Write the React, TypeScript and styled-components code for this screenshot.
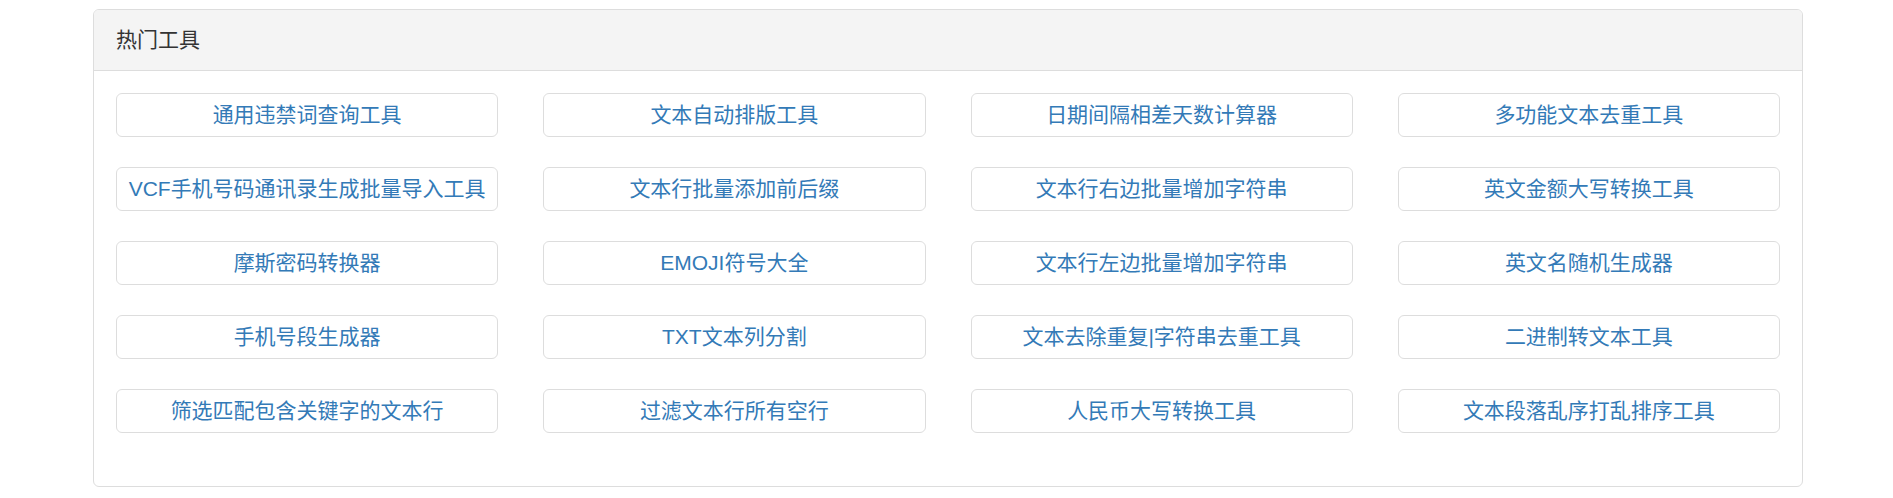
import styled, { createGlobalStyle } from "styled-components";

const GlobalStyle = createGlobalStyle`
  body {
    margin: 0;
    background-color: #ffffff;
    font-family: "Liberation Sans", "Noto Sans CJK SC", sans-serif;
  }
`;

const Page = styled.div`
  padding: 9px 0 0 93px;
`;

const Panel = styled.div`
  width: 1710px;
  box-sizing: border-box;
  border: 1px solid #dddddd;
  border-radius: 6px;
  background-color: #ffffff;
  overflow: hidden;
`;

const PanelHeading = styled.div`
  height: 61px;
  box-sizing: border-box;
  display: flex;
  align-items: center;
  padding: 0 22px 5px;
  background-color: #f4f4f4;
  border-bottom: 1px solid #dddddd;
  color: #333333;
  font-size: 21px;
`;

const PanelBody = styled.div`
  display: grid;
  grid-template-columns: repeat(4, 1fr);
  column-gap: 45px;
  row-gap: 30px;
  padding: 22px 22px 53px;
`;

const ToolLink = styled.a`
  height: 44px;
  box-sizing: border-box;
  display: flex;
  align-items: center;
  justify-content: center;
  padding-bottom: 5px;
  border: 1px solid #dddddd;
  border-radius: 6px;
  color: #337ab7;
  font-size: 21px;
  white-space: nowrap;
  text-decoration: none;
  cursor: pointer;
`;

const tools = [
  "通用违禁词查询工具",
  "文本自动排版工具",
  "日期间隔相差天数计算器",
  "多功能文本去重工具",
  "VCF手机号码通讯录生成批量导入工具",
  "文本行批量添加前后缀",
  "文本行右边批量增加字符串",
  "英文金额大写转换工具",
  "摩斯密码转换器",
  "EMOJI符号大全",
  "文本行左边批量增加字符串",
  "英文名随机生成器",
  "手机号段生成器",
  "TXT文本列分割",
  "文本去除重复|字符串去重工具",
  "二进制转文本工具",
  "筛选匹配包含关键字的文本行",
  "过滤文本行所有空行",
  "人民币大写转换工具",
  "文本段落乱序打乱排序工具",
];

const App = () => {
  return (
    <Page>
      <GlobalStyle />
      <Panel>
        <PanelHeading>热门工具</PanelHeading>
        <PanelBody>
          {tools.map((name) => (
            <ToolLink key={name}>{name}</ToolLink>
          ))}
        </PanelBody>
      </Panel>
    </Page>
  );
};

export default App;
